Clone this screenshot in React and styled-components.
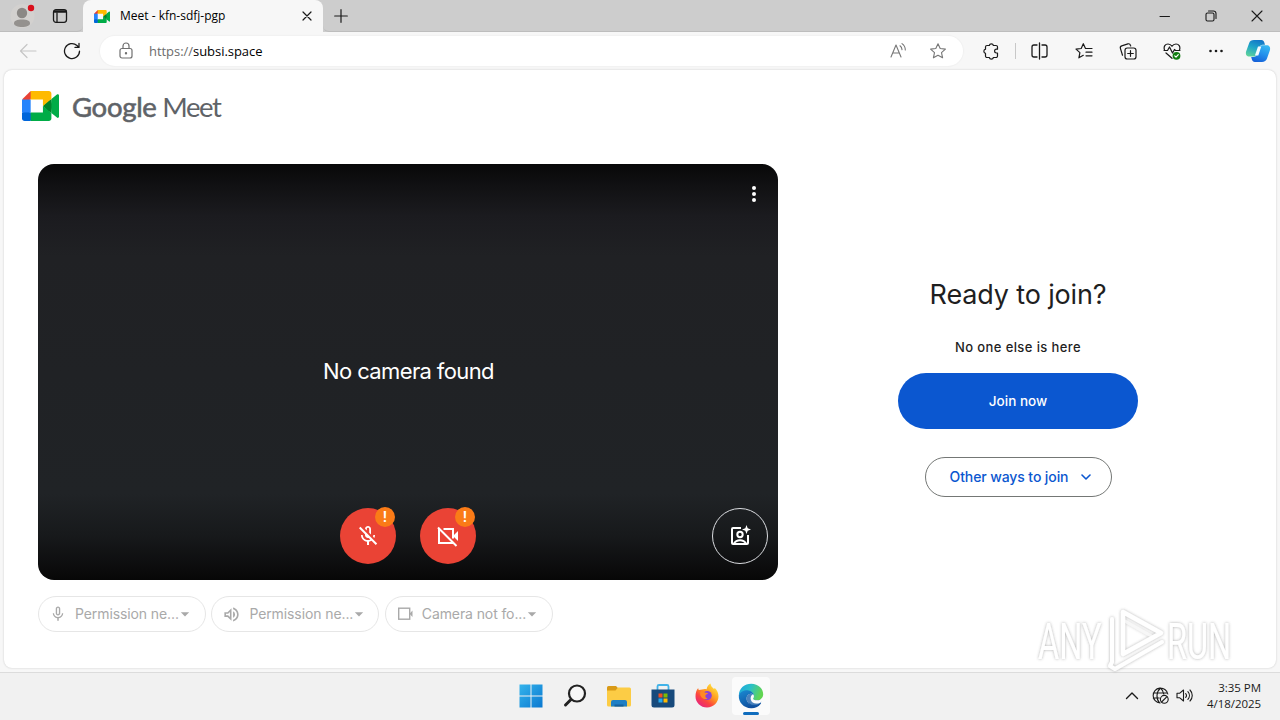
import React from "react";
import styled, { createGlobalStyle } from "styled-components";
import {
  MdArrowDropDown,
  MdMicNone,
  MdOutlineMicOff,
  MdOutlineVolumeUp,
} from "react-icons/md";

const GlobalStyle = createGlobalStyle`
  * {
    box-sizing: border-box;
  }
  body {
    margin: 0;
    overflow: hidden;
  }
  svg {
    display: block;
    flex-shrink: 0;
  }
`;

const Screen = styled.div`
  width: 1280px;
  height: 720px;
  display: flex;
  flex-direction: column;
  background: #f7f7f7;
  font-family: "Open Sans", "Noto Sans", sans-serif;
  color: #000;
`;

/* ---------- browser chrome ---------- */

const TabBar = styled.div`
  height: 32px;
  display: flex;
  background: #cdcdcd;
`;

const TabSlot = styled.div`
  width: ${(p) => p.$w}px;
  height: 32px;
  display: flex;
  align-items: center;
  justify-content: center;
`;

const Tabs = styled.div`
  display: flex;
  flex: 1;
`;

const TabTools = styled.div`
  width: 83px;
  display: flex;
  padding-left: 4px;
  border-bottom: 1px solid #bdbdbd;
  border-bottom-right-radius: 6px;
`;

const ActiveTab = styled.div`
  width: 240px;
  height: 32px;
  display: flex;
  align-items: center;
  padding: 0 9px 0 11px;
  background: #f7f7f7;
  border-radius: 8px 8px 0 0;
`;

const TabTitle = styled.span`
  flex: 1;
  margin-left: 10px;
  font-size: 12px;
  line-height: 16px;
  white-space: nowrap;
`;

const TabRest = styled.div`
  flex: 1;
  display: flex;
  border-bottom: 1px solid #bdbdbd;
  border-bottom-left-radius: 6px;
`;

const Toolbar = styled.div`
  height: 38px;
  display: flex;
  align-items: center;
  padding-left: 6px;
`;

const ToolButton = styled.div`
  width: ${(p) => p.$w || 44}px;
  height: 30px;
  display: flex;
  align-items: center;
  justify-content: center;
`;

const AddressBar = styled.div`
  width: 863px;
  height: 30px;
  margin: 0 6px 0 6px;
  display: flex;
  align-items: center;
  padding: 0 6px 0 16px;
  border-radius: 15px;
  background: #fff;
  box-shadow: 0 0 1px 1px #f1f1f1;
`;

const Url = styled.span`
  flex: 1;
  margin-left: 13px;
  font-size: 13px;
  line-height: 18px;
  letter-spacing: -0.04px;
`;

const Scheme = styled.span`
  color: #6c6c6c;
`;

const Divider = styled.div`
  width: 1px;
  height: 16px;
  margin: 0 2px;
  background: #c8c8c8;
`;

/* ---------- page ---------- */

const Page = styled.div`
  position: relative;
  width: 1272px;
  height: 598px;
  margin: 0 4px 4px;
  display: flex;
  flex-direction: column;
  background: #fff;
  border-radius: 8px;
  box-shadow: 0 0 2px 0 #c4c4c4;
`;

const Header = styled.div`
  height: 94px;
  display: flex;
  align-items: flex-start;
  padding: 21px 0 0 18px;
`;

const Brand = styled.div`
  margin: -2px 0 0 13px;
  font-family: Lato, sans-serif;
  font-size: 27.5px;
  line-height: 36px;
  letter-spacing: -1.4px;
  color: #5f6368;
  white-space: nowrap;
`;

const BrandStrong = styled.span`
  letter-spacing: -0.3px;
  -webkit-text-stroke: 0.6px #5f6368;
`;

const Content = styled.div`
  display: flex;
  padding-left: 34px;
`;

const Preview = styled.div`
  width: 740px;
`;

const Video = styled.div`
  width: 740px;
  height: 416px;
  display: flex;
  flex-direction: column;
  justify-content: space-between;
  border-radius: 16px;
  background: linear-gradient(
    #080808 0,
    #111113 22px,
    #1b1b1f 52px,
    #202124 92px,
    #202326 330px,
    #17191b 372px,
    #0c0c0d 404px,
    #070707 416px
  );
`;

const VideoTop = styled.div`
  display: flex;
  justify-content: flex-end;
  padding: 20px 19px 0 0;
`;

const VideoMessage = styled.div`
  text-align: center;
  font-family: Inter, sans-serif;
  font-size: 22px;
  line-height: 32px;
  letter-spacing: -0.62px;
  color: #fff;
  padding: 30px 0 0 1px;
`;

const VideoControls = styled.div`
  display: grid;
  grid-template-columns: 1fr auto 1fr;
  align-items: center;
  padding: 0 10px 16px;
`;

const CallButtons = styled.div`
  grid-column: 2;
  display: flex;
  gap: 24px;
`;

const RoundButton = styled.div`
  position: relative;
  width: 56px;
  height: 56px;
  display: flex;
  align-items: center;
  justify-content: center;
  justify-self: end;
  border-radius: 50%;
  color: #fff;
  background: ${(p) => (p.$off ? "#ea4335" : "transparent")};
  border: ${(p) => (p.$off ? "none" : "1px solid #dadce0")};
`;

const Alert = styled.div`
  position: absolute;
  top: -1px;
  right: 1px;
  width: 20px;
  height: 20px;
  border-radius: 50%;
  background: #fa7b17;
  color: #fff;
  font-family: Roboto, sans-serif;
  font-size: 14px;
  font-weight: 700;
  line-height: 20px;
  text-align: center;
`;

const Devices = styled.div`
  display: flex;
  gap: 5.4px;
  margin-top: 16px;
`;

const Device = styled.div`
  width: 168px;
  height: 36px;
  display: flex;
  align-items: center;
  padding-left: 10px;
  border: 1px solid #e6e6e6;
  border-radius: 18px;
  color: #a9a9a9;
`;

const DeviceName = styled.span`
  width: 105px;
  margin: -1px 0 0 8px;
  font-family: Inter, sans-serif;
  font-size: 14px;
  letter-spacing: -0.1px;
  white-space: nowrap;
`;

const DeviceArrow = styled.div`
  margin-left: -5px;
`;

const JoinPanel = styled.div`
  width: 240px;
  margin-left: 120px;
  padding-top: 113px;
  display: flex;
  flex-direction: column;
  align-items: center;
  font-family: Inter, sans-serif;
`;

const JoinTitle = styled.h1`
  margin: 0;
  font-size: 27px;
  font-weight: 400;
  line-height: 36px;
  letter-spacing: -0.15px;
  color: #1f1f1f;
  white-space: nowrap;
`;

const JoinStatus = styled.p`
  margin: 24px 0 16px;
  font-size: 13px;
  font-weight: 500;
  line-height: 20px;
  letter-spacing: 0.4px;
  color: #1f1f1f;
`;

const JoinButton = styled.div`
  width: 240px;
  height: 56px;
  display: flex;
  align-items: center;
  justify-content: center;
  border-radius: 28px;
  background: #0b57d0;
  color: #fff;
  font-size: 13.5px;
  font-weight: 500;
`;

const OtherWays = styled.div`
  width: 187px;
  height: 40px;
  margin-top: 28px;
  display: flex;
  align-items: center;
  padding: 0 0 1px 24px;
  gap: 13px;
  border: 1px solid #747775;
  border-radius: 20px;
  color: #0b57d0;
  font-size: 14px;
  font-weight: 500;
  letter-spacing: -0.1px;
  white-space: nowrap;
`;

const Watermark = styled.div`
  position: absolute;
  left: 1028px;
  top: 534px;
`;

/* ---------- taskbar ---------- */

const Taskbar = styled.div`
  height: 48px;
  display: grid;
  grid-template-columns: 1fr auto 1fr;
  align-items: center;
  padding-bottom: 2px;
  background: #f1f1f1;
  border-top: 1px solid #dcdcdc;
`;

const Apps = styled.div`
  grid-column: 2;
  display: flex;
  padding-left: 2px;
`;

const AppSlot = styled.div`
  position: relative;
  width: 38px;
  height: 38px;
  margin: 0 3px;
  display: flex;
  align-items: center;
  justify-content: center;
  border-radius: 4px;
  background: ${(p) => (p.$active ? "#fbfbfb" : "transparent")};
`;

const Running = styled.div`
  position: absolute;
  bottom: 0;
  left: 11px;
  width: 16px;
  height: 3px;
  border-radius: 2px;
  background: #0f6cbd;
`;

const Tray = styled.div`
  display: flex;
  align-items: center;
  justify-content: flex-end;
  padding-right: 19px;
`;

const TrayIcon = styled.div`
  width: ${(p) => p.$w}px;
  display: flex;
  justify-content: center;
`;

const Clock = styled.div`
  width: 66px;
  text-align: right;
  font-size: 11.5px;
  line-height: 16px;
  letter-spacing: -0.05px;
  color: #1a1a1a;
`;

/* ---------- drawings ---------- */

const Line = ({ w = 18, h, sw = 1.2, color = "#1a1a1a", box = 18, children }) => (
  <svg
    width={w}
    height={h || w}
    viewBox={`0 0 ${box} ${box}`}
    fill="none"
    stroke={color}
    strokeWidth={sw}
    strokeLinecap="round"
    strokeLinejoin="round"
  >
    {children}
  </svg>
);

const MeetLogo = ({ width, height }) => (
  <svg width={width} height={height} viewBox="0 0 87.5 72" preserveAspectRatio="none">
    <path fill="#00832d" d="M49.5 36l8.53 9.75 11.47 7.33 2-17.02-2-16.64-11.69 6.44z" />
    <path fill="#0066da" d="M0 51.5V66c0 3.315 2.685 6 6 6h14.5l3-10.96-3-9.54-9.95-3z" />
    <path fill="#e94235" d="M20.5 0L0 20.5l10.55 3 9.95-3 2.95-9.41z" />
    <path fill="#2684fc" d="M20.5 20.5H0v31h20.5z" />
    <path
      fill="#00ac47"
      d="M82.6 8.68L69.5 19.42v33.66l13.16 10.79c1.97 1.54 4.85.135 4.85-2.37V11c0-2.535-2.945-3.925-4.91-2.32zM49.5 36v15.5h-29V72h43c3.315 0 6-2.685 6-6V53.08z"
    />
    <path fill="#ffba00" d="M63.5 0h-43v20.5h29V36l20-16.57V6c0-3.315-2.685-6-6-6z" />
  </svg>
);

const ProfileIcon = () => (
  <svg width="26" height="26" viewBox="0 0 26 26">
    <circle cx="12.500" cy="13" r="12" fill="#d3d1cf" />
    <circle cx="12" cy="10" r="5.2" fill="#8b8885" />
    <path d="M4 20.5c0-3 3-4 8-4s8 1 8 4c0 2.200-3.500 3.500-8 3.500s-8-1.300-8-3.500z" fill="#94918e" />
    <circle cx="21" cy="5" r="3.200" fill="#d90f1c" />
  </svg>
);

const CopilotIcon = () => (
  <svg width="26" height="24" viewBox="0 0 26 24">
    <defs>
      <linearGradient id="cpA" x1="0.6" y1="0" x2="0.2" y2="1">
        <stop offset="0" stopColor="#1378c8" />
        <stop offset="0.45" stopColor="#1fa5c8" />
        <stop offset="1" stopColor="#5fd39a" />
      </linearGradient>
      <linearGradient id="cpB" x1="0.7" y1="0" x2="0.3" y2="1">
        <stop offset="0" stopColor="#35b8f2" />
        <stop offset="0.5" stopColor="#2390ec" />
        <stop offset="1" stopColor="#1560d8" />
      </linearGradient>
    </defs>
    <path
      d="M9 1h7.500c1.600 0 2.300 1 2.800 2.400l.7 2.300h-2.300c-1.800 0-2.700 1-3.300 2.700l-2 6.300c-.7 2-1.500 2.800-3.200 2.800H4.600c-3 0-4.300-2-3.500-5L4 4.400C4.800 2 6.500 1 9 1z"
      fill="url(#cpA)"
    />
    <path
      d="M17 23H9.800c-1.600 0-2.400-1-2.900-2.400L6.200 18h2.500c1.800 0 2.700-1 3.300-2.700l2-6.300c.7-2 1.500-2.800 3.200-2.800h4.200c3 0 4.300 2 3.500 5L22 19.600c-.8 2.400-2.500 3.400-5 3.400z"
      fill="url(#cpB)"
    />
    <path d="M13 7.500h3.300l-3 9h-3.400z" fill="#f4fbff" />
  </svg>
);

const FolderIcon = () => (
  <svg width="26" height="24" viewBox="0 0 26 24">
    <path d="M1 3.500A1.500 1.500 0 0 1 2.500 2H10l2.500 2.500L10 7H1z" fill="#d99a17" />
    <path d="M1 6.500h8.500L12 3.500h11.500A1.500 1.500 0 0 1 25 5v16a1.500 1.500 0 0 1-1.500 1.500h-21A1.500 1.500 0 0 1 1 21z" fill="#fccc45" />
    <path d="M5 22.500V18a2 2 0 0 1 2-2h12a2 2 0 0 1 2 2v4.500z" fill="#1f7fc4" />
    <path d="M8.500 20.500h9v2h-9z" fill="#14609f" />
  </svg>
);

const StoreIcon = () => (
  <svg width="24" height="26" viewBox="0 0 24 26">
    <path d="M6.500 7.500V3.500A1.500 1.500 0 0 1 8 2h8A1.500 1.500 0 0 1 17.500 3.500v4" fill="none" stroke="#42b3e8" strokeWidth="1.800" />
    <path d="M.5 6.500h23V22a2.500 2.500 0 0 1-2.500 2.500H3A2.500 2.500 0 0 1 .5 22z" fill="#174a7c" />
    <path d="M7.500 10.500h4v4h-4z" fill="#f25022" />
    <path d="M12.500 10.500h4v4h-4z" fill="#7fba00" />
    <path d="M7.500 15.500h4v4h-4z" fill="#25aaf0" />
    <path d="M12.500 15.500h4v4h-4z" fill="#ffb900" />
  </svg>
);

const FirefoxIcon = () => (
  <svg width="24" height="25" viewBox="0 0 24 25">
    <defs>
      <linearGradient id="fx" x1="0.85" y1="0.1" x2="0.2" y2="0.95">
        <stop offset="0" stopColor="#ffe23c" />
        <stop offset="0.4" stopColor="#ff9a1f" />
        <stop offset="0.7" stopColor="#fb4440" />
        <stop offset="1" stopColor="#e6257e" />
      </linearGradient>
    </defs>
    <path
      d="M3.200 5c0 1 .3 1.600.7 2L7 6.600c1.500-.7 3-.8 4.600-.4.500-2.800 1.900-4.600 3.900-5.700.3 2.800 1.700 4 3.500 5.400l.8-.9c2.300 2.300 3.700 5.200 3.700 8.300C23.500 19.500 18.400 24.500 12 24.500S.5 19.500.5 13.500C.5 10 1.300 7 3.200 5z"
      fill="url(#fx)"
    />
    <circle cx="12.300" cy="12.500" r="4.500" fill="#8a42d8" />
    <path d="M5.500 8.500c2-.8 3.700 0 4.600 1.200 1.300-.2 2.500.2 3 1-1.500.3-2.500 1-2.700 2-.2 1.300.6 2.400 2.200 2.700-2 1.500-5 .5-6.500-1.700-1.100-1.600-1.200-3.500-.6-5.200z" fill="#ff8a22" />
  </svg>
);

const EdgeIcon = () => (
  <svg width="26" height="26" viewBox="0 0 256 256">
    <defs>
      <linearGradient id="edA" x1="0" y1="0" x2="1" y2="0.3">
        <stop offset="0" stopColor="#1ba5e0" />
        <stop offset="0.5" stopColor="#2bc0c8" />
        <stop offset="1" stopColor="#62d552" />
      </linearGradient>
      <linearGradient id="edB" x1="0" y1="0" x2="0.5" y2="1">
        <stop offset="0" stopColor="#1a8bd3" />
        <stop offset="1" stopColor="#0e4d9c" />
      </linearGradient>
    </defs>
    <path d="M8 122C10 52 66 8 130 8c72 0 118 50 118 102 0 36-28 60-62 60-27 0-38-9-38-18 0-6 9-10 9-26 0-23-22-43-55-43-44 0-80 23-94 39z" fill="url(#edA)" />
    <path d="M8 122c14-34 55-54 94-49 31 4 54 26 55 50-7-12-19-18-31-18-33 0-53 38-35 75 20 41 72 53 126 19 5-3 9 1 6 6-26 37-65 45-95 43C56 244 4 190 8 122z" fill="url(#edB)" />
    <path d="M91 180c-18-37 2-75 35-75 12 0 22 8 31 18 0 16-9 22-9 29 0 10 14 19 38 19 13 0 25-3 35-8l6 17c4 4-1 18-10 23-54 32-106 18-126-23z" fill="#0f59a8" opacity="0.75" />
    <path d="M148 152c0 10 14 19 38 19 26 0 45-12 55-27-2 22-10 38-24 52-43 16-84 4-92-36-3-20 3-39 20-48 19 8 12 30 3 40z" fill="#fbfbfb" />
    <path d="M100 190c22 27 73 36 117 9 5-3 9 1 6 6-30 40-105 38-123-15z" fill="#1055a3" />
  </svg>
);

const AnyRunMark = () => (
  <svg width="216" height="74" viewBox="0 0 216 74">
    <defs>
      <filter id="soft" x="-10%" y="-10%" width="120%" height="120%">
        <feDropShadow dx="0" dy="0" stdDeviation="1.700" floodColor="#666" floodOpacity="0.65" />
      </filter>
    </defs>
    <g filter="url(#soft)" fill="#fff" opacity="0.8" fontFamily="Roboto, sans-serif" fontSize="50">
      <text transform="translate(6 55) scale(0.65 1)">ANY</text>
      <text transform="translate(135 55) scale(0.65 1)">RUN</text>
      <g fill="none" stroke="#fff" strokeWidth="4.500" strokeLinejoin="round" strokeLinecap="round">
        <path d="M91 49V8l38 21-38 21" />
        <path d="M91 16l30 17" strokeWidth="3" opacity="0.6" />
        <path d="M80 15v43l-2 4 5 3 47-27" strokeWidth="4" />
      </g>
    </g>
  </svg>
);

const MicIcon = () => <MdMicNone size={18} />;
const SpeakerIcon = () => <MdOutlineVolumeUp size={19} />;
const CameraIcon = () => (
  <svg width="18" height="18" viewBox="0 0 18 18">
    <rect x="2.700" y="3.200" width="11" height="11" fill="none" stroke="currentColor" strokeWidth="1.400" />
    <path d="M13.500 8.700l3-3.200v6.500z" fill="currentColor" />
  </svg>
);

const DEVICES = [
  { name: "Permission ne...", Icon: MicIcon },
  { name: "Permission ne...", Icon: SpeakerIcon },
  { name: "Camera not fo...", Icon: CameraIcon },
];

const STAR = "M9 1.700l2.200 4.800 5.200.6-3.900 3.500 1.100 5.200L9 13.200l-4.600 2.600 1.100-5.200L1.600 7.100l5.200-.6z";

const BrowserTabs = () => (
  <TabBar>
    <TabTools>
      <TabSlot $w={37}>
        <ProfileIcon />
      </TabSlot>
      <TabSlot $w={38}>
        <Line w={16} box={16} sw={1.3}>
          <rect x="1.500" y="1.700" width="13" height="12.600" rx="2.500" />
          <path d="M2.500 3.600h11" strokeWidth="2.500" />
          <path d="M5 5v9" />
        </Line>
      </TabSlot>
    </TabTools>
    <ActiveTab>
      <MeetLogo width={16} height={13} />
      <TabTitle>Meet - kfn-sdfj-pgp</TabTitle>
      <Line w={14} box={14} sw={1.2}>
        <path d="M3 3l8 8M11 3l-8 8" />
      </Line>
    </ActiveTab>
    <TabRest>
      <TabSlot $w={35}>
        <Line w={14} box={14} sw={1.2}>
          <path d="M7 .7v12.600M.7 7h12.600" />
        </Line>
      </TabSlot>
      <Tabs />
      <TabSlot $w={46}>
        <Line w={12} box={12} sw={1}>
          <path d="M1 6.500h9.500" />
        </Line>
      </TabSlot>
      <TabSlot $w={46}>
        <Line w={12} box={12} sw={1.1}>
          <rect x="1" y="3" width="8" height="8" rx="1.500" />
          <path d="M3.500 1h5A2.500 2.500 0 0 1 11 3.500v5" />
        </Line>
      </TabSlot>
      <TabSlot $w={46}>
        <Line w={12} box={12} sw={1.1}>
          <path d="M1 1l10 10M11 1L1 11" />
        </Line>
      </TabSlot>
    </TabRest>
  </TabBar>
);

const BrowserToolbar = () => (
  <Toolbar>
    <ToolButton>
      <Line color="#c6c6c6">
        <path d="M17 9H1.500M8 2.500L1.500 9 8 15.500" />
      </Line>
    </ToolButton>
    <ToolButton>
      <Line sw={1.3}>
        <path d="M16.500 9.200A7.500 7.500 0 1 1 14 3.500l1.600 1.600M16 1.400v4h-4" />
      </Line>
    </ToolButton>
    <AddressBar>
      <Line w={20} box={20} color="#707070">
        <rect x="4" y="7.500" width="12" height="9.500" rx="2" />
        <path d="M7 7.500V5a3 3 0 0 1 6 0v2.500" />
        <circle cx="10" cy="12.300" r=".6" fill="#707070" />
      </Line>
      <Url>
        <Scheme>https://</Scheme>subsi.space
      </Url>
      <ToolButton $w={39}>
        <Line color="#777" sw={1.1}>
          <path d="M1 15L6 3l5 12M2.800 11h6.500M10 3.800c1.300.9 1.900 2.200 2 3.800M12 1.600c2.200 1.500 3.300 3.700 3.300 6.300" />
        </Line>
      </ToolButton>
      <ToolButton $w={39}>
        <Line color="#777" sw={1.1}>
          <path d={STAR} />
        </Line>
      </ToolButton>
    </AddressBar>
    <ToolButton>
      <Line>
        <path d="M5 3.500h2.300a2.100 2.100 0 0 1 4.100 0H14A1.500 1.500 0 0 1 15.500 5v2.200h-1a1.900 1.900 0 0 0 0 3.800h1v3A1.500 1.500 0 0 1 14 15.500h-2.600a2.100 2.100 0 0 1-4.100 0H5A1.500 1.500 0 0 1 3.500 14v-2.700a2.100 2.100 0 0 1 0-4.100V5A1.500 1.500 0 0 1 5 3.500z" />
      </Line>
    </ToolButton>
    <Divider />
    <ToolButton>
      <Line sw={1.3}>
        <path d="M6 3H3a2 2 0 0 0-2 2v8a2 2 0 0 0 2 2h3M11 3h3a2 2 0 0 1 2 2v8a2 2 0 0 1-2 2h-3M8.500 1v16" />
      </Line>
    </ToolButton>
    <ToolButton>
      <Line>
        <path d="M10.500 6.500L8.300 1.700 6.200 6.500l-5.200.6 3.900 3.500-1 5.200 4.400-2.500M10.500 6.500H17M11 10.200h6M11 13.800h6" />
      </Line>
    </ToolButton>
    <ToolButton>
      <Line>
        <rect x="6" y="6" width="11" height="11" rx="2.300" />
        <path d="M11.500 8.700v5.600M8.700 11.500h5.600M3.500 13.200L1.400 6.400a2 2 0 0 1 1.300-2.500l6.200-2a2 2 0 0 1 2.500 1.300l.3.800" />
      </Line>
    </ToolButton>
    <ToolButton>
      <Line>
        <path d="M1.500 8C.3 4.500 2.300 2 5 2c2 0 3.200 1 4 2.300C9.800 3 11 2 13 2c2.700 0 4.700 2.500 3.500 6M1 8.500h3.500L6.500 5l3 6 2-3.500 1 1H17M3 11l6 5.300" />
        <circle cx="13.500" cy="13.800" r="3.900" fill="#107c10" stroke="none" />
        <path d="M11.700 13.900l1.300 1.200 2.300-2.500" stroke="#fff" />
      </Line>
    </ToolButton>
    <ToolButton>
      <Line>
        <g fill="#1a1a1a" stroke="none">
          <circle cx="3.500" cy="9" r="1.300" />
          <circle cx="9" cy="9" r="1.300" />
          <circle cx="14.500" cy="9" r="1.300" />
        </g>
      </Line>
    </ToolButton>
    <ToolButton $w={40}>
      <CopilotIcon />
    </ToolButton>
  </Toolbar>
);

const VideoPreview = () => (
  <Preview>
    <Video>
      <VideoTop>
        <svg width="10" height="20" viewBox="0 0 10 20" fill="#fff">
          <circle cx="5" cy="4" r="2" />
          <circle cx="5" cy="10" r="2" />
          <circle cx="5" cy="16" r="2" />
        </svg>
      </VideoTop>
      <VideoMessage>No camera found</VideoMessage>
      <VideoControls>
        <CallButtons>
          <RoundButton $off>
            <MdOutlineMicOff size={24} />
            <Alert>!</Alert>
          </RoundButton>
          <RoundButton $off>
            <svg width="24" height="24" viewBox="0 0 24 24" fill="none" stroke="#fff" strokeWidth="2">
              <path d="M7.500 5H17v9.500M3 5v14h14" />
              <path d="M2 3.500L20.500 22" />
              <path d="M17 12l5-5v10z" fill="#fff" stroke="none" />
            </svg>
            <Alert>!</Alert>
          </RoundButton>
        </CallButtons>
        <RoundButton>
          <svg width="24" height="24" viewBox="0 0 24 24" fill="none" stroke="#fff" strokeWidth="2">
            <path d="M13 4H5a1 1 0 0 0-1 1v14a1 1 0 0 0 1 1h14a1 1 0 0 0 1-1v-8" />
            <circle cx="12" cy="10.500" r="2.700" />
            <path d="M6 19.500c1.200-2.200 3.400-3.300 6-3.300s4.800 1.100 6 3.300" />
            <path d="M18.500 1l1.200 3.300L23 5.500l-3.300 1.200-1.200 3.300-1.200-3.300L14 5.500l3.300-1.200z" fill="#fff" stroke="none" />
          </svg>
        </RoundButton>
      </VideoControls>
    </Video>
    <Devices>
      {DEVICES.map(({ name, Icon }, i) => (
        <Device key={i}>
          <Icon />
          <DeviceName>{name}</DeviceName>
          <DeviceArrow>
            <MdArrowDropDown size={20} />
          </DeviceArrow>
        </Device>
      ))}
    </Devices>
  </Preview>
);

const WindowsTaskbar = () => (
  <Taskbar>
    <Apps>
      <AppSlot>
        <svg width="24" height="24" viewBox="0 0 24 24">
          <defs>
            <linearGradient id="win" x1="0" y1="0" x2="1" y2="1">
              <stop offset="0" stopColor="#35b4ec" />
              <stop offset="1" stopColor="#0a78d0" />
            </linearGradient>
          </defs>
          <path fill="url(#win)" d="M.5.5h11v11H.5zM12.500.5h11v11h-11zM.5 12.500h11v11H.5zM12.500 12.500h11v11h-11z" />
        </svg>
      </AppSlot>
      <AppSlot>
        <svg width="24" height="24" viewBox="0 0 24 24" fill="none" stroke="#222" strokeLinecap="round">
          <circle cx="14" cy="9.500" r="8" fill="#f7f7f7" strokeWidth="2.200" />
          <path d="M8 15.500L2.500 21" strokeWidth="3" />
        </svg>
      </AppSlot>
      <AppSlot>
        <FolderIcon />
      </AppSlot>
      <AppSlot>
        <StoreIcon />
      </AppSlot>
      <AppSlot>
        <FirefoxIcon />
      </AppSlot>
      <AppSlot $active>
        <EdgeIcon />
        <Running />
      </AppSlot>
    </Apps>
    <Tray>
      <TrayIcon $w={30}>
        <Line w={14} box={14} sw={1.4}>
          <path d="M1.500 9.500L7 4l5.500 5.500" />
        </Line>
      </TrayIcon>
      <TrayIcon $w={26}>
        <Line w={17} box={17} sw={1.1}>
          <path d="M15.800 7A7.400 7.400 0 1 0 8 15.900M1.300 6h14M1.300 11h6M8.500 1C4 5 4 12 7.500 15.800M8.500 1c2 1.800 3 4 3.200 6" />
          <circle cx="12.300" cy="12.300" r="3.900" />
          <path d="M9.600 15l5.400-5.400" />
        </Line>
      </TrayIcon>
      <TrayIcon $w={22}>
        <Line w={17} box={17} sw={1.1}>
          <path d="M1 6.300h2.500L7.500 3v11l-4-3.300H1zM9.700 6.500c1 1.200 1 2.800 0 4M11.900 4.700c2 2.200 2 5.400 0 7.600M14 3c3 3.200 3 7.800 0 11" />
        </Line>
      </TrayIcon>
      <Clock>
        3:35 PM
        <br />
        4/18/2025
      </Clock>
    </Tray>
  </Taskbar>
);

const App = () => {
  return (
    <Screen>
      <GlobalStyle />
      <BrowserTabs />
      <BrowserToolbar />
      <Page>
        <Header>
          <MeetLogo width={37} height={30} />
          <Brand>
            <BrandStrong>Google</BrandStrong> Meet
          </Brand>
        </Header>
        <Content>
          <VideoPreview />
          <JoinPanel>
            <JoinTitle>Ready to join?</JoinTitle>
            <JoinStatus>No one else is here</JoinStatus>
            <JoinButton>Join now</JoinButton>
            <OtherWays>
              Other ways to join
              <Line w={10} box={10} sw={1.6} color="#0b57d0">
                <path d="M1 3l4 4 4-4" />
              </Line>
            </OtherWays>
          </JoinPanel>
        </Content>
        <Watermark>
          <AnyRunMark />
        </Watermark>
      </Page>
      <WindowsTaskbar />
    </Screen>
  );
};

export default App;
